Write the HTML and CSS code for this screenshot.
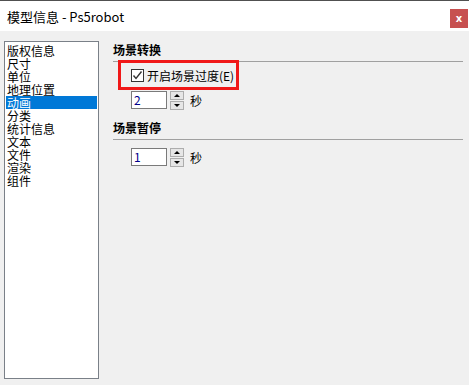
FILE: index.html
```html
<!DOCTYPE html>
<html lang="zh-CN">

<head>
    <meta charset="UTF-8">
    <title>模型信息 - Ps5robot</title>
    <link rel="stylesheet" href="styles.css">
</head>

<body>
    <div class="window">
        <div class="titlebar">
            <span class="title">模型信息 - Ps5robot</span>
            <button class="close">x</button>
        </div>

        <div class="main">
            <!-- left category list -->
            <ul class="list">
                <li>版权信息</li>
                <li>尺寸</li>
                <li>单位</li>
                <li>地理位置</li>
                <li class="selected">动画</li>
                <li>分类</li>
                <li>统计信息</li>
                <li>文本</li>
                <li>文件</li>
                <li>渲染</li>
                <li>组件</li>
            </ul>

            <!-- right settings panel -->
            <div class="panel">
                <div class="group-title">场景转换</div>
                <div class="separator"></div>
                <label class="check-row">
                    <span class="checkbox">
                        <svg width="11" height="11" viewBox="0 0 11 11">
                            <path d="M1.5 5.5 L4 8.5 L9.5 1.5" fill="none" stroke="#333" stroke-width="1.4"/>
                        </svg>
                    </span>
                    <span>开启场景过度(E)</span>
                    <span class="highlight"></span>
                </label>
                <div class="spin-row">
                    <div class="input">2</div>
                    <div class="spin">
                        <span class="spin-btn"><span class="arrow up"></span></span>
                        <span class="spin-btn"><span class="arrow down"></span></span>
                    </div>
                    <span class="unit">秒</span>
                </div>

                <div class="group-title second">场景暂停</div>
                <div class="separator"></div>
                <div class="spin-row last">
                    <div class="input">1</div>
                    <div class="spin">
                        <span class="spin-btn"><span class="arrow up"></span></span>
                        <span class="spin-btn"><span class="arrow down"></span></span>
                    </div>
                    <span class="unit">秒</span>
                </div>
            </div>
        </div>
    </div>
</body>

</html>
```

FILE: styles.css
```css
body {
    margin: 0;
    background: #f0f0f0;
    font-family: "Noto Sans CJK SC", "Liberation Sans", sans-serif;
    color: #000;
}

.window {
    width: 469px;
    height: 385px;
    overflow: hidden;
}

.titlebar {
    display: flex;
    align-items: center;
    justify-content: space-between;
    height: 30px;
    background: #fff;
    border-top: 1px solid #505050;
}

.title {
    margin-left: 7px;
    font-size: 13px;
    margin-top: 1px;
}

.close {
    width: 18px;
    height: 19px;
    margin-right: 1px;
    margin-top: 5px;
    padding: 0;
    border: none;
    background: #c75050;
    color: #fff;
    font-family: "DejaVu Sans", sans-serif;
    font-weight: bold;
    font-size: 10px;
    line-height: 17px;
}

.main {
    display: flex;
    padding: 10px 0 0 4px;
}

.list {
    width: 91px;
    height: 334px;
    margin: 0;
    padding: 1px;
    list-style: none;
    background: #fff;
    border: 1px solid #7a8088;
    box-sizing: content-box;
}

.list li {
    height: 13px;
    line-height: 13px;
    font-size: 12px;
    padding-left: 1px;
}

.list li:first-child {
    margin-top: 1px;
}

.list li.selected {
    background: #0078d7;
    color: #fff;
}

.panel {
    flex: 1;
    padding-left: 14px;
    padding-right: 6px;
}

.group-title {
    height: 17px;
    line-height: 17px;
    font-size: 12px;
    font-weight: bold;
}

.group-title.second {
    margin-top: 10px;
}

.separator {
    height: 1px;
    margin-top: 3px;
    background: #a0a0a0;
}

.check-row {
    position: relative;
    display: flex;
    align-items: center;
    gap: 3px;
    height: 18px;
    margin-top: 4px;
    padding-left: 18px;
    font-size: 12px;
}

.checkbox {
    display: flex;
    align-items: center;
    justify-content: center;
    width: 11px;
    height: 11px;
    border: 1px solid #333;
    background: #fff;
}

/* red annotation frame drawn over the checkbox */
.highlight {
    position: absolute;
    left: 5px;
    top: -6px;
    width: 115px;
    height: 24px;
    border: 3px solid #f01818;
}

.spin-row {
    display: flex;
    align-items: center;
    height: 18px;
    margin-top: 7px;
    padding-left: 18px;
}

.spin-row.last {
    margin-top: 8px;
}

.input {
    width: 32px;
    height: 16px;
    padding-left: 2px;
    line-height: 16px;
    font-size: 12px;
    background: #fff;
    border: 1px solid #7a7a7a;
    color: #00008b;
}

.spin {
    display: flex;
    flex-direction: column;
    gap: 1px;
    margin-left: 3px;
}

.spin-btn {
    display: flex;
    align-items: center;
    justify-content: center;
    width: 12px;
    height: 7px;
    background: #e6e6e6;
    border: 1px solid #adadad;
}

.arrow {
    width: 0;
    height: 0;
    border-left: 3px solid transparent;
    border-right: 3px solid transparent;
}

.arrow.up {
    border-bottom: 3px solid #000;
}

.arrow.down {
    border-top: 3px solid #000;
}

.unit {
    margin-left: 6px;
    font-size: 12px;
}
```
